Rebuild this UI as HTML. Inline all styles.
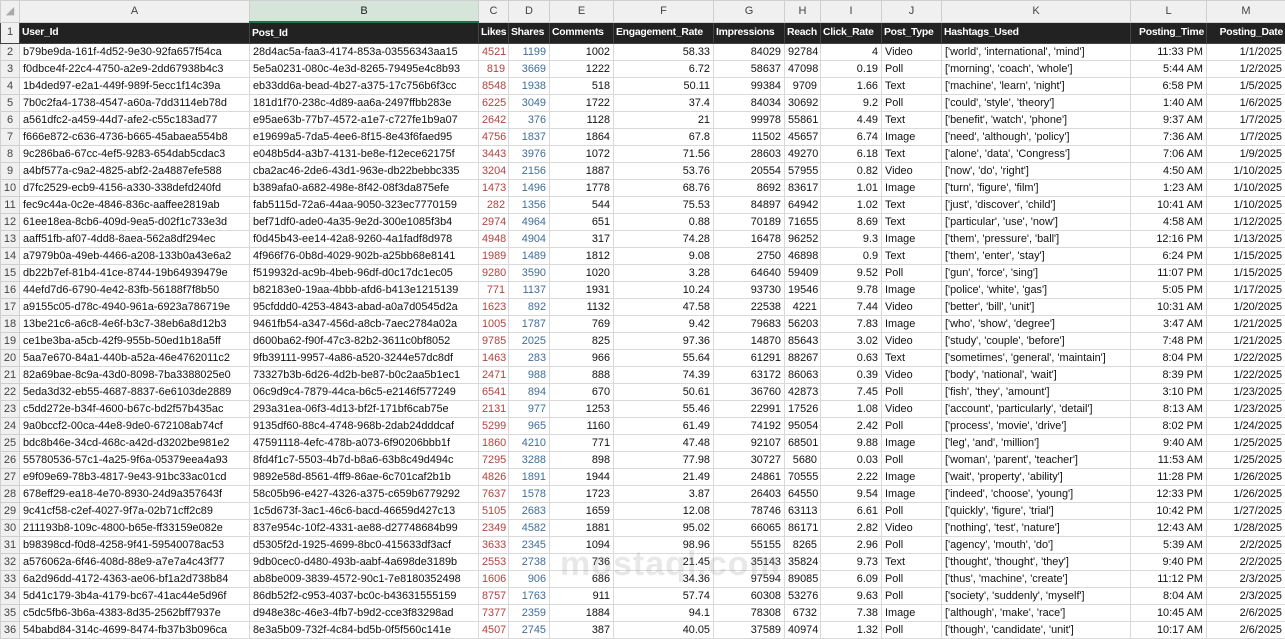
<!DOCTYPE html>
<html><head><meta charset="utf-8"><style>
body{margin:0;width:1285px;height:635px;overflow:hidden;background:#fff;font-family:"Liberation Sans",Arial,sans-serif;font-size:10.9px;color:#111}
table{border-collapse:collapse;table-layout:fixed;width:1285px}
td{border:1px solid #d9d9d9;padding:0 3px;height:16px;line-height:15px;white-space:nowrap;overflow:hidden}
tr.ch td{height:20px;background:#f0f0f0;color:#444;text-align:center;font-size:11px;border-color:#cfcfcf}
tr.ch td.sel{background:#d6e5da;border-bottom:2px solid #217346;color:#222}
tr.h td{background:#222;color:#fff;font-weight:bold;height:20px;border-color:#444;font-size:10.4px;letter-spacing:-0.25px;padding:0 2px;overflow:visible}
tr.h td.rh{background:#f0f0f0;color:#444;font-weight:normal;letter-spacing:0;font-size:11px}
td.rh{background:#f0f0f0;color:#444;text-align:center;padding:0;font-size:11px;border-color:#cfcfcf}
td.n{text-align:right}
td.r{text-align:right;color:#b3413f}
td.b{text-align:right;color:#3f6d9b}
.wm{position:absolute;left:560px;top:545px;font-size:34px;font-weight:bold;color:rgba(150,150,150,0.22);letter-spacing:1px}
</style></head><body>
<table>
<colgroup><col style="width:19px"><col style="width:230px"><col style="width:229px"><col style="width:30px"><col style="width:41px"><col style="width:64px"><col style="width:100px"><col style="width:71px"><col style="width:36px"><col style="width:61px"><col style="width:60px"><col style="width:189px"><col style="width:76px"><col style="width:79px"></colgroup>
<tr class="ch"><td style="color:#aaa">◢</td><td>A</td><td class="sel">B</td><td>C</td><td>D</td><td>E</td><td>F</td><td>G</td><td>H</td><td>I</td><td>J</td><td>K</td><td>L</td><td>M</td></tr>
<tr class="h"><td class="rh">1</td><td>User_Id</td><td>Post_Id</td><td>Likes</td><td>Shares</td><td>Comments</td><td>Engagement_Rate</td><td>Impressions</td><td>Reach</td><td>Click_Rate</td><td>Post_Type</td><td>Hashtags_Used</td><td style="text-align:right">Posting_Time</td><td style="text-align:right">Posting_Date</td></tr>
<tr><td class="rh">2</td><td>b79be9da-161f-4d52-9e30-92fa657f54ca</td><td>28d4ac5a-faa3-4174-853a-03556343aa15</td><td class="r">4521</td><td class="b">1199</td><td class="n">1002</td><td class="n">58.33</td><td class="n">84029</td><td class="n">92784</td><td class="n">4</td><td>Video</td><td>['world', 'international', 'mind']</td><td class="n">11:33 PM</td><td class="n">1/1/2025</td></tr>
<tr><td class="rh">3</td><td>f0dbce4f-22c4-4750-a2e9-2dd67938b4c3</td><td>5e5a0231-080c-4e3d-8265-79495e4c8b93</td><td class="r">819</td><td class="b">3669</td><td class="n">1222</td><td class="n">6.72</td><td class="n">58637</td><td class="n">47098</td><td class="n">0.19</td><td>Poll</td><td>['morning', 'coach', 'whole']</td><td class="n">5:44 AM</td><td class="n">1/2/2025</td></tr>
<tr><td class="rh">4</td><td>1b4ded97-e2a1-449f-989f-5ecc1f14c39a</td><td>eb33dd6a-bead-4b27-a375-17c756b6f3cc</td><td class="r">8548</td><td class="b">1938</td><td class="n">518</td><td class="n">50.11</td><td class="n">99384</td><td class="n">9709</td><td class="n">1.66</td><td>Text</td><td>['machine', 'learn', 'night']</td><td class="n">6:58 PM</td><td class="n">1/5/2025</td></tr>
<tr><td class="rh">5</td><td>7b0c2fa4-1738-4547-a60a-7dd3114eb78d</td><td>181d1f70-238c-4d89-aa6a-2497ffbb283e</td><td class="r">6225</td><td class="b">3049</td><td class="n">1722</td><td class="n">37.4</td><td class="n">84034</td><td class="n">30692</td><td class="n">9.2</td><td>Poll</td><td>['could', 'style', 'theory']</td><td class="n">1:40 AM</td><td class="n">1/6/2025</td></tr>
<tr><td class="rh">6</td><td>a561dfc2-a459-44d7-afe2-c55c183ad77</td><td>e95ae63b-77b7-4572-a1e7-c727fe1b9a07</td><td class="r">2642</td><td class="b">376</td><td class="n">1128</td><td class="n">21</td><td class="n">99978</td><td class="n">55861</td><td class="n">4.49</td><td>Text</td><td>['benefit', 'watch', 'phone']</td><td class="n">9:37 AM</td><td class="n">1/7/2025</td></tr>
<tr><td class="rh">7</td><td>f666e872-c636-4736-b665-45abaea554b8</td><td>e19699a5-7da5-4ee6-8f15-8e43f6faed95</td><td class="r">4756</td><td class="b">1837</td><td class="n">1864</td><td class="n">67.8</td><td class="n">11502</td><td class="n">45657</td><td class="n">6.74</td><td>Image</td><td>['need', 'although', 'policy']</td><td class="n">7:36 AM</td><td class="n">1/7/2025</td></tr>
<tr><td class="rh">8</td><td>9c286ba6-67cc-4ef5-9283-654dab5cdac3</td><td>e048b5d4-a3b7-4131-be8e-f12ece62175f</td><td class="r">3443</td><td class="b">3976</td><td class="n">1072</td><td class="n">71.56</td><td class="n">28603</td><td class="n">49270</td><td class="n">6.18</td><td>Text</td><td>['alone', 'data', 'Congress']</td><td class="n">7:06 AM</td><td class="n">1/9/2025</td></tr>
<tr><td class="rh">9</td><td>a4bf577a-c9a2-4825-abf2-2a4887efe588</td><td>cba2ac46-2de6-43d1-963e-db22bebbc335</td><td class="r">3204</td><td class="b">2156</td><td class="n">1887</td><td class="n">53.76</td><td class="n">20554</td><td class="n">57955</td><td class="n">0.82</td><td>Video</td><td>['now', 'do', 'right']</td><td class="n">4:50 AM</td><td class="n">1/10/2025</td></tr>
<tr><td class="rh">10</td><td>d7fc2529-ecb9-4156-a330-338defd240fd</td><td>b389afa0-a682-498e-8f42-08f3da875efe</td><td class="r">1473</td><td class="b">1496</td><td class="n">1778</td><td class="n">68.76</td><td class="n">8692</td><td class="n">83617</td><td class="n">1.01</td><td>Image</td><td>['turn', 'figure', 'film']</td><td class="n">1:23 AM</td><td class="n">1/10/2025</td></tr>
<tr><td class="rh">11</td><td>fec9c44a-0c2e-4846-836c-aaffee2819ab</td><td>fab5115d-72a6-44aa-9050-323ec7770159</td><td class="r">282</td><td class="b">1356</td><td class="n">544</td><td class="n">75.53</td><td class="n">84897</td><td class="n">64942</td><td class="n">1.02</td><td>Text</td><td>['just', 'discover', 'child']</td><td class="n">10:41 AM</td><td class="n">1/10/2025</td></tr>
<tr><td class="rh">12</td><td>61ee18ea-8cb6-409d-9ea5-d02f1c733e3d</td><td>bef71df0-ade0-4a35-9e2d-300e1085f3b4</td><td class="r">2974</td><td class="b">4964</td><td class="n">651</td><td class="n">0.88</td><td class="n">70189</td><td class="n">71655</td><td class="n">8.69</td><td>Text</td><td>['particular', 'use', 'now']</td><td class="n">4:58 AM</td><td class="n">1/12/2025</td></tr>
<tr><td class="rh">13</td><td>aaff51fb-af07-4dd8-8aea-562a8df294ec</td><td>f0d45b43-ee14-42a8-9260-4a1fadf8d978</td><td class="r">4948</td><td class="b">4904</td><td class="n">317</td><td class="n">74.28</td><td class="n">16478</td><td class="n">96252</td><td class="n">9.3</td><td>Image</td><td>['them', 'pressure', 'ball']</td><td class="n">12:16 PM</td><td class="n">1/13/2025</td></tr>
<tr><td class="rh">14</td><td>a7979b0a-49eb-4466-a208-133b0a43e6a2</td><td>4f966f76-0b8d-4029-902b-a25bb68e8141</td><td class="r">1989</td><td class="b">1489</td><td class="n">1812</td><td class="n">9.08</td><td class="n">2750</td><td class="n">46898</td><td class="n">0.9</td><td>Text</td><td>['them', 'enter', 'stay']</td><td class="n">6:24 PM</td><td class="n">1/15/2025</td></tr>
<tr><td class="rh">15</td><td>db22b7ef-81b4-41ce-8744-19b64939479e</td><td>f519932d-ac9b-4beb-96df-d0c17dc1ec05</td><td class="r">9280</td><td class="b">3590</td><td class="n">1020</td><td class="n">3.28</td><td class="n">64640</td><td class="n">59409</td><td class="n">9.52</td><td>Poll</td><td>['gun', 'force', 'sing']</td><td class="n">11:07 PM</td><td class="n">1/15/2025</td></tr>
<tr><td class="rh">16</td><td>44efd7d6-6790-4e42-83fb-56188f7f8b50</td><td>b82183e0-19aa-4bbb-afd6-b413e1215139</td><td class="r">771</td><td class="b">1137</td><td class="n">1931</td><td class="n">10.24</td><td class="n">93730</td><td class="n">19546</td><td class="n">9.78</td><td>Image</td><td>['police', 'white', 'gas']</td><td class="n">5:05 PM</td><td class="n">1/17/2025</td></tr>
<tr><td class="rh">17</td><td>a9155c05-d78c-4940-961a-6923a786719e</td><td>95cfddd0-4253-4843-abad-a0a7d0545d2a</td><td class="r">1623</td><td class="b">892</td><td class="n">1132</td><td class="n">47.58</td><td class="n">22538</td><td class="n">4221</td><td class="n">7.44</td><td>Video</td><td>['better', 'bill', 'unit']</td><td class="n">10:31 AM</td><td class="n">1/20/2025</td></tr>
<tr><td class="rh">18</td><td>13be21c6-a6c8-4e6f-b3c7-38eb6a8d12b3</td><td>9461fb54-a347-456d-a8cb-7aec2784a02a</td><td class="r">1005</td><td class="b">1787</td><td class="n">769</td><td class="n">9.42</td><td class="n">79683</td><td class="n">56203</td><td class="n">7.83</td><td>Image</td><td>['who', 'show', 'degree']</td><td class="n">3:47 AM</td><td class="n">1/21/2025</td></tr>
<tr><td class="rh">19</td><td>ce1be3ba-a5cb-42f9-955b-50ed1b18a5ff</td><td>d600ba62-f90f-47c3-82b2-3611c0bf8052</td><td class="r">9785</td><td class="b">2025</td><td class="n">825</td><td class="n">97.36</td><td class="n">14870</td><td class="n">85643</td><td class="n">3.02</td><td>Video</td><td>['study', 'couple', 'before']</td><td class="n">7:48 PM</td><td class="n">1/21/2025</td></tr>
<tr><td class="rh">20</td><td>5aa7e670-84a1-440b-a52a-46e4762011c2</td><td>9fb39111-9957-4a86-a520-3244e57dc8df</td><td class="r">1463</td><td class="b">283</td><td class="n">966</td><td class="n">55.64</td><td class="n">61291</td><td class="n">88267</td><td class="n">0.63</td><td>Text</td><td>['sometimes', 'general', 'maintain']</td><td class="n">8:04 PM</td><td class="n">1/22/2025</td></tr>
<tr><td class="rh">21</td><td>82a69bae-8c9a-43d0-8098-7ba3388025e0</td><td>73327b3b-6d26-4d2b-be87-b0c2aa5b1ec1</td><td class="r">2471</td><td class="b">988</td><td class="n">888</td><td class="n">74.39</td><td class="n">63172</td><td class="n">86063</td><td class="n">0.39</td><td>Video</td><td>['body', 'national', 'wait']</td><td class="n">8:39 PM</td><td class="n">1/22/2025</td></tr>
<tr><td class="rh">22</td><td>5eda3d32-eb55-4687-8837-6e6103de2889</td><td>06c9d9c4-7879-44ca-b6c5-e2146f577249</td><td class="r">6541</td><td class="b">894</td><td class="n">670</td><td class="n">50.61</td><td class="n">36760</td><td class="n">42873</td><td class="n">7.45</td><td>Poll</td><td>['fish', 'they', 'amount']</td><td class="n">3:10 PM</td><td class="n">1/23/2025</td></tr>
<tr><td class="rh">23</td><td>c5dd272e-b34f-4600-b67c-bd2f57b435ac</td><td>293a31ea-06f3-4d13-bf2f-171bf6cab75e</td><td class="r">2131</td><td class="b">977</td><td class="n">1253</td><td class="n">55.46</td><td class="n">22991</td><td class="n">17526</td><td class="n">1.08</td><td>Video</td><td>['account', 'particularly', 'detail']</td><td class="n">8:13 AM</td><td class="n">1/23/2025</td></tr>
<tr><td class="rh">24</td><td>9a0bccf2-00ca-44e8-9de0-672108ab74cf</td><td>9135df60-88c4-4748-968b-2dab24dddcaf</td><td class="r">5299</td><td class="b">965</td><td class="n">1160</td><td class="n">61.49</td><td class="n">74192</td><td class="n">95054</td><td class="n">2.42</td><td>Poll</td><td>['process', 'movie', 'drive']</td><td class="n">8:02 PM</td><td class="n">1/24/2025</td></tr>
<tr><td class="rh">25</td><td>bdc8b46e-34cd-468c-a42d-d3202be981e2</td><td>47591118-4efc-478b-a073-6f90206bbb1f</td><td class="r">1860</td><td class="b">4210</td><td class="n">771</td><td class="n">47.48</td><td class="n">92107</td><td class="n">68501</td><td class="n">9.88</td><td>Image</td><td>['leg', 'and', 'million']</td><td class="n">9:40 AM</td><td class="n">1/25/2025</td></tr>
<tr><td class="rh">26</td><td>55780536-57c1-4a25-9f6a-05379eea4a93</td><td>8fd4f1c7-5503-4b7d-b8a6-63b8c49d494c</td><td class="r">7295</td><td class="b">3288</td><td class="n">898</td><td class="n">77.98</td><td class="n">30727</td><td class="n">5680</td><td class="n">0.03</td><td>Poll</td><td>['woman', 'parent', 'teacher']</td><td class="n">11:53 AM</td><td class="n">1/25/2025</td></tr>
<tr><td class="rh">27</td><td>e9f09e69-78b3-4817-9e43-91bc33ac01cd</td><td>9892e58d-8561-4ff9-86ae-6c701caf2b1b</td><td class="r">4826</td><td class="b">1891</td><td class="n">1944</td><td class="n">21.49</td><td class="n">24861</td><td class="n">70555</td><td class="n">2.22</td><td>Image</td><td>['wait', 'property', 'ability']</td><td class="n">11:28 PM</td><td class="n">1/26/2025</td></tr>
<tr><td class="rh">28</td><td>678eff29-ea18-4e70-8930-24d9a357643f</td><td>58c05b96-e427-4326-a375-c659b6779292</td><td class="r">7637</td><td class="b">1578</td><td class="n">1723</td><td class="n">3.87</td><td class="n">26403</td><td class="n">64550</td><td class="n">9.54</td><td>Image</td><td>['indeed', 'choose', 'young']</td><td class="n">12:33 PM</td><td class="n">1/26/2025</td></tr>
<tr><td class="rh">29</td><td>9c41cf58-c2ef-4027-9f7a-02b71cff2c89</td><td>1c5d673f-3ac1-46c6-bacd-46659d427c13</td><td class="r">5105</td><td class="b">2683</td><td class="n">1659</td><td class="n">12.08</td><td class="n">78746</td><td class="n">63113</td><td class="n">6.61</td><td>Poll</td><td>['quickly', 'figure', 'trial']</td><td class="n">10:42 PM</td><td class="n">1/27/2025</td></tr>
<tr><td class="rh">30</td><td>211193b8-109c-4800-b65e-ff33159e082e</td><td>837e954c-10f2-4331-ae88-d27748684b99</td><td class="r">2349</td><td class="b">4582</td><td class="n">1881</td><td class="n">95.02</td><td class="n">66065</td><td class="n">86171</td><td class="n">2.82</td><td>Video</td><td>['nothing', 'test', 'nature']</td><td class="n">12:43 AM</td><td class="n">1/28/2025</td></tr>
<tr><td class="rh">31</td><td>b98398cd-f0d8-4258-9f41-59540078ac53</td><td>d5305f2d-1925-4699-8bc0-415633df3acf</td><td class="r">3633</td><td class="b">2345</td><td class="n">1094</td><td class="n">98.96</td><td class="n">55155</td><td class="n">8265</td><td class="n">2.96</td><td>Poll</td><td>['agency', 'mouth', 'do']</td><td class="n">5:39 AM</td><td class="n">2/2/2025</td></tr>
<tr><td class="rh">32</td><td>a576062a-6f46-408d-88e9-a7e7a4c43f77</td><td>9db0cec0-d480-493b-aabf-4a698de3189b</td><td class="r">2553</td><td class="b">2738</td><td class="n">736</td><td class="n">21.45</td><td class="n">35143</td><td class="n">35824</td><td class="n">9.73</td><td>Text</td><td>['thought', 'thought', 'they']</td><td class="n">9:40 PM</td><td class="n">2/2/2025</td></tr>
<tr><td class="rh">33</td><td>6a2d96dd-4172-4363-ae06-bf1a2d738b84</td><td>ab8be009-3839-4572-90c1-7e8180352498</td><td class="r">1606</td><td class="b">906</td><td class="n">686</td><td class="n">34.36</td><td class="n">97594</td><td class="n">89085</td><td class="n">6.09</td><td>Poll</td><td>['thus', 'machine', 'create']</td><td class="n">11:12 PM</td><td class="n">2/3/2025</td></tr>
<tr><td class="rh">34</td><td>5d41c179-3b4a-4179-bc67-41ac44e5d96f</td><td>86db52f2-c953-4037-bc0c-b43631555159</td><td class="r">8757</td><td class="b">1763</td><td class="n">911</td><td class="n">57.74</td><td class="n">60308</td><td class="n">53276</td><td class="n">9.63</td><td>Poll</td><td>['society', 'suddenly', 'myself']</td><td class="n">8:04 AM</td><td class="n">2/3/2025</td></tr>
<tr><td class="rh">35</td><td>c5dc5fb6-3b6a-4383-8d35-2562bff7937e</td><td>d948e38c-46e3-4fb7-b9d2-cce3f83298ad</td><td class="r">7377</td><td class="b">2359</td><td class="n">1884</td><td class="n">94.1</td><td class="n">78308</td><td class="n">6732</td><td class="n">7.38</td><td>Image</td><td>['although', 'make', 'race']</td><td class="n">10:45 AM</td><td class="n">2/6/2025</td></tr>
<tr><td class="rh">36</td><td>54babd84-314c-4699-8474-fb37b3b096ca</td><td>8e3a5b09-732f-4c84-bd5b-0f5f560c141e</td><td class="r">4507</td><td class="b">2745</td><td class="n">387</td><td class="n">40.05</td><td class="n">37589</td><td class="n">40974</td><td class="n">1.32</td><td>Poll</td><td>['though', 'candidate', 'unit']</td><td class="n">10:17 AM</td><td class="n">2/6/2025</td></tr>
</table>
<div class="wm">mostaql.com</div>
</body></html>
